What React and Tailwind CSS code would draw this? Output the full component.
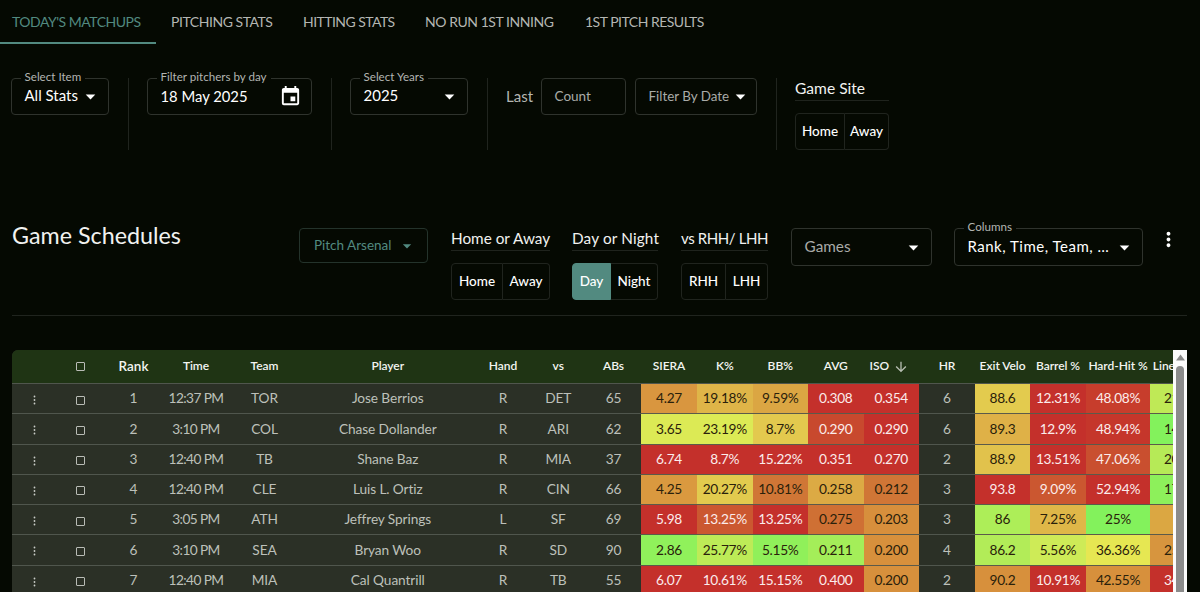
import React from "react";
import { MdArrowDropDown, MdEvent, MdMoreVert, MdArrowDownward } from "react-icons/md";

const tabs = [
  { label: "TODAY'S MATCHUPS", className: "w-[156px] pl-[12px] tracking-[-0.48px]", active: true },
  { label: "PITCHING STATS", className: "w-[132px] pl-[15px] tracking-[-0.45px]" },
  { label: "HITTING STATS", className: "w-[122px] pl-[15px] tracking-[-0.55px]" },
  { label: "NO RUN 1ST INNING", className: "w-[160px] pl-[15px] tracking-[-0.44px]" },
  { label: "1ST PITCH RESULTS", className: "w-[150px] pl-[15px] tracking-[-0.5px]" },
];

const headers = [
  "Time", "Team", "Player", "Hand", "vs", "ABs", "SIERA", "K%", "BB%", "AVG",
  "ISO", "HR", "Exit Velo", "Barrel %", "Hard-Hit %", "Line Drive %",
];

// stat cells are [value, background]
const rows = [
  {
    info: ["1", "12:37 PM", "TOR", "Jose Berrios", "R", "DET", "65"],
    pitching: [["4.27", "#d9963f"], ["19.18%", "#dfb548"], ["9.59%", "#dba643"], ["0.308", "#c4302b"], ["0.354", "#c4302b"]],
    hr: "6",
    contact: [["88.6", "#e3cb4e"], ["12.31%", "#c4302b"], ["48.08%", "#c73d2c"], ["21.15%", "#bfe956"]],
  },
  {
    info: ["2", "3:10 PM", "COL", "Chase Dollander", "R", "ARI", "62"],
    pitching: [["3.65", "#dcea55"], ["23.19%", "#dcea55"], ["8.7%", "#e3c94e"], ["0.290", "#c8492e"], ["0.290", "#c4302b"]],
    hr: "6",
    contact: [["89.3", "#dfb147"], ["12.9%", "#c4302b"], ["48.94%", "#c5362b"], ["14.89%", "#83f25c"]],
  },
  {
    info: ["3", "12:40 PM", "TB", "Shane Baz", "R", "MIA", "37"],
    pitching: [["6.74", "#c4302b"], ["8.7%", "#c4302b"], ["15.22%", "#c4302b"], ["0.351", "#c4302b"], ["0.270", "#c4302b"]],
    hr: "2",
    contact: [["88.9", "#e1c24c"], ["13.51%", "#c4302b"], ["47.06%", "#c94f2f"], ["20.59%", "#b6ea57"]],
  },
  {
    info: ["4", "12:40 PM", "CLE", "Luis L. Ortiz", "R", "CIN", "66"],
    pitching: [["4.25", "#da993f"], ["20.27%", "#e2cb4e"], ["10.81%", "#d07636"], ["0.258", "#dcaa44"], ["0.212", "#d07636"]],
    hr: "3",
    contact: [["93.8", "#c4302b"], ["9.09%", "#cb5730"], ["52.94%", "#c4302b"], ["17.65%", "#8df05b"]],
  },
  {
    info: ["5", "3:05 PM", "ATH", "Jeffrey Springs", "L", "SF", "69"],
    pitching: [["5.98", "#c4302b"], ["13.25%", "#cb5830"], ["13.25%", "#c4302b"], ["0.275", "#cf7034"], ["0.203", "#d78f3c"]],
    hr: "3",
    contact: [["86", "#adee58"], ["7.25%", "#dfb748"], ["25%", "#83f25c"], ["25%", "#dba742"]],
  },
  {
    info: ["6", "3:10 PM", "SEA", "Bryan Woo", "R", "SD", "90"],
    pitching: [["2.86", "#90f15b"], ["25.77%", "#bdeb57"], ["5.15%", "#90f05a"], ["0.211", "#a4ee59"], ["0.200", "#d7903c"]],
    hr: "4",
    contact: [["86.2", "#b2ec58"], ["5.56%", "#ceeb57"], ["36.36%", "#e6e752"], ["25.45%", "#d7953e"]],
  },
  {
    info: ["7", "12:40 PM", "MIA", "Cal Quantrill", "R", "TB", "55"],
    pitching: [["6.07", "#c4302b"], ["10.61%", "#c4302b"], ["15.15%", "#c4302b"], ["0.400", "#c4302b"], ["0.200", "#d7903c"]],
    hr: "2",
    contact: [["90.2", "#d7903c"], ["10.91%", "#c4302b"], ["42.55%", "#d7903c"], ["34.04%", "#c4302b"]],
  },
];

const lightTextOn = ["#c4302b", "#c73d2c", "#c8492e", "#c5362b", "#c94f2f", "#cb5730", "#cb5830"];

const gridCols =
  "grid grid-cols-[45px_47px_59px_66px_71px_175.5px_55px_55.5px_55px_56px_55.5px_55.5px_55.5px_55.5px_56px_55px_56px_64px_72px]";

const Field = ({ label, className = "pb-[2px] text-[15px] text-white", size = "", children }) => (
  <div
    className={`relative flex items-center rounded-[4px] border border-[#2f332d] px-[12.5px] whitespace-nowrap ${size} ${className}`}
  >
    {label && (
      <span className="absolute -top-[10px] left-[8.5px] bg-[#050902] px-[4px] text-[11.6px] leading-[16px] tracking-normal text-[#b3b5b2]">
        {label}
      </span>
    )}
    {children}
  </div>
);

const Caret = ({ className = "-mr-[6px] -mb-[2px]" }) => (
  <MdArrowDropDown className={`ml-auto h-[23px] w-[23px] shrink-0 text-white ${className}`} />
);

const Divider = () => <div className="mx-[18.5px] h-[72px] w-px bg-[#20241e]" />;

const ToggleGroup = ({ title, titleClass = "text-[15.3px]", className = "", options }) => (
  <div className={className}>
    <h3 className={`h-[23px] border-b border-[#1f231d] leading-[20px] whitespace-nowrap text-[#f1f2f0] ${titleClass}`}>
      {title}
    </h3>
    <div className="mt-[12px] flex h-[37px]">
      {options.map((option) => (
        <button
          key={option.label}
          className={`flex items-center justify-center border-y border-r pb-px text-[13.5px] font-medium text-white first:rounded-l-[4px] first:border-l last:rounded-r-[4px] ${
            option.className
          } ${option.active ? "border-[#528a80] bg-[#528a80]" : "border-[#20241e]"}`}
        >
          {option.label}
        </button>
      ))}
    </div>
  </div>
);

const Checkbox = () => (
  <span className="h-[9px] w-[9px] rounded-[1px] border border-[#b9bcb6]" />
);

const RowMenu = () => (
  <svg width="3" height="10" viewBox="0 0 3 10" fill="#c9ccc7">
    <circle cx="1.5" cy="1.5" r="0.9" />
    <circle cx="1.5" cy="5" r="0.9" />
    <circle cx="1.5" cy="8.5" r="0.9" />
  </svg>
);

const StatCell = ({ value, color }) => (
  <div
    className={`flex items-center justify-center border-b border-[#5b5a4a] tracking-[-0.3px] ${
      lightTextOn.includes(color) ? "text-[#fbeceb]" : "text-[#2a210b]"
    }`}
    style={{ backgroundColor: color }}
  >
    {value}
  </div>
);

const InfoCell = ({ children, className = "" }) => (
  <div className={`flex items-center justify-center border-b border-[#50564d] whitespace-nowrap ${className}`}>
    {children}
  </div>
);

const ScheduleTable = () => (
  <div className="ml-[12px] flex h-[242px] w-[1175px]">
    <div className="w-[1161px] overflow-hidden rounded-tl-[6px] bg-[#2b3026]">
      <div className={`${gridCols} h-[34px] w-max bg-[#1f3414] text-[12px] font-semibold text-[#f3f5f1]`}>
        <InfoCell />
        <InfoCell>
          <Checkbox />
        </InfoCell>
        <InfoCell className="pb-px text-[13.5px]">Rank</InfoCell>
        {headers.map((header) => (
          <InfoCell key={header} className="pb-[2px] tracking-[-0.05px]">
            {header}
            {header === "ISO" && (
              <MdArrowDownward className="mt-[3px] mr-[4px] ml-[4px] h-[16px] w-[16px] text-[#b6bdb1]" />
            )}
          </InfoCell>
        ))}
      </div>
      {rows.map((row) => (
        <div key={row.info[0]} className={`${gridCols} h-[30.25px] w-max text-[13.7px] text-[#bdc0ba]`}>
          <InfoCell className="pt-[3px]">
            <RowMenu />
          </InfoCell>
          <InfoCell className="pt-[3px]">
            <Checkbox />
          </InfoCell>
          {row.info.map((value, i) => (
            <InfoCell key={i} className={i === 1 ? "tracking-[-0.6px]" : "tracking-[-0.1px]"}>
              {value}
            </InfoCell>
          ))}
          {row.pitching.map(([value, color], i) => (
            <StatCell key={i} value={value} color={color} />
          ))}
          <InfoCell>{row.hr}</InfoCell>
          {row.contact.map(([value, color], i) => (
            <StatCell key={i} value={value} color={color} />
          ))}
        </div>
      ))}
    </div>
    <div className="flex w-[14px] flex-col items-center bg-[#fbfbfb]">
      <svg className="mt-[4px] h-[7px] w-[9px]" viewBox="0 0 9 7" fill="#8b8b8b">
        <path d="M4.5 0.5 9 6.5H0z" />
      </svg>
      <div className="mt-[5px] w-[8px] grow rounded-t-full bg-[#8b8b8b]" />
    </div>
  </div>
);

export default function App() {
  return (
    <div className="h-[592px] w-[1200px] overflow-hidden bg-[#050902] font-[Lato,sans-serif]">
      <nav className="flex h-[44px] text-[14px]">
        {tabs.map((tab) => (
          <button
            key={tab.label}
            className={`flex items-center border-b-2 whitespace-nowrap ${tab.className} ${
              tab.active ? "border-[#528a80] text-[#528a80]" : "border-transparent text-[#b4b6b2]"
            }`}
          >
            {tab.label}
          </button>
        ))}
      </nav>

      <section className="flex h-[150px] pt-[34px] pl-[11px]">
        <Field label="Select Item" size="h-[37px] w-[98px]">
          All Stats
          <Caret />
        </Field>
        <Divider />
        <Field label="Filter pitchers by day" size="h-[37px] w-[165px]" className="pb-px text-[14.8px] text-white">
          18 May 2025
          <MdEvent className="-mr-[3px] ml-auto h-[23px] w-[23px]" />
        </Field>
        <Divider />
        <Field label="Select Years" size="h-[37px] w-[118px]">
          2025
          <Caret />
        </Field>
        <Divider />
        <span className="w-[35px] text-[15px] leading-[36px] text-[#b4b6b2]">Last</span>
        <Field size="h-[37px] w-[85px]" className="text-[13.5px] text-[#a9aba8]">
          Count
        </Field>
        <Field size="ml-[9px] h-[37px] w-[122px]" className="text-[13.4px] text-[#a9aba8]">
          Filter By Date
          <Caret className="-mr-[4px]" />
        </Field>
        <Divider />
        <ToggleGroup
          title="Game Site"
          titleClass="text-[15.6px]"
          className="w-[94px]"
          options={[
            { label: "Home", className: "w-[50px]" },
            { label: "Away", className: "w-[44px]" },
          ]}
        />
      </section>

      <section className="ml-[12px] flex h-[122px] w-[1175px] border-b border-[#20241e] pt-[34px]">
        <h2 className="w-[287px] text-[23.3px] leading-[14px] text-[#f1f2f0]">Game Schedules</h2>
        <button className="flex h-[35px] w-[129px] items-center rounded-[4px] border border-[#24332b] px-[14px] text-[13.5px] text-[#528a80]">
          Pitch Arsenal
          <MdArrowDropDown className="-mr-[4px] ml-auto h-[20px] w-[20px]" />
        </button>
        <ToggleGroup
          title="Home or Away"
          className="ml-[23px] w-[99px]"
          options={[
            { label: "Home", className: "w-[52px]" },
            { label: "Away", className: "w-[47px]" },
          ]}
        />
        <ToggleGroup
          title="Day or Night"
          titleClass="text-[15.3px] tracking-[0.15px]"
          className="ml-[22px] w-[86px]"
          options={[
            { label: "Day", className: "w-[39px]", active: true },
            { label: "Night", className: "w-[47px]" },
          ]}
        />
        <ToggleGroup
          title="vs RHH/ LHH"
          titleClass="text-[15px] tracking-[-0.4px]"
          className="ml-[23px] w-[87px]"
          options={[
            { label: "RHH", className: "w-[45px]" },
            { label: "LHH", className: "w-[42px]" },
          ]}
        />
        <Field size="ml-[23px] h-[38px] w-[141px]" className="pb-[2px] text-[15.3px] text-[#a9aba8]">
          Games
          <Caret />
        </Field>
        <Field label="Columns" size="ml-[22px] h-[38px] w-[189px]" className="pb-[2px] text-[15px] tracking-[0.5px] text-white">
          Rank, Time, Team, …
          <Caret />
        </Field>
        <MdMoreVert className="ml-[14px] h-[23px] w-[23px] text-white" />
      </section>

      <div className="pt-[34px]">
        <ScheduleTable />
      </div>
    </div>
  );
}
